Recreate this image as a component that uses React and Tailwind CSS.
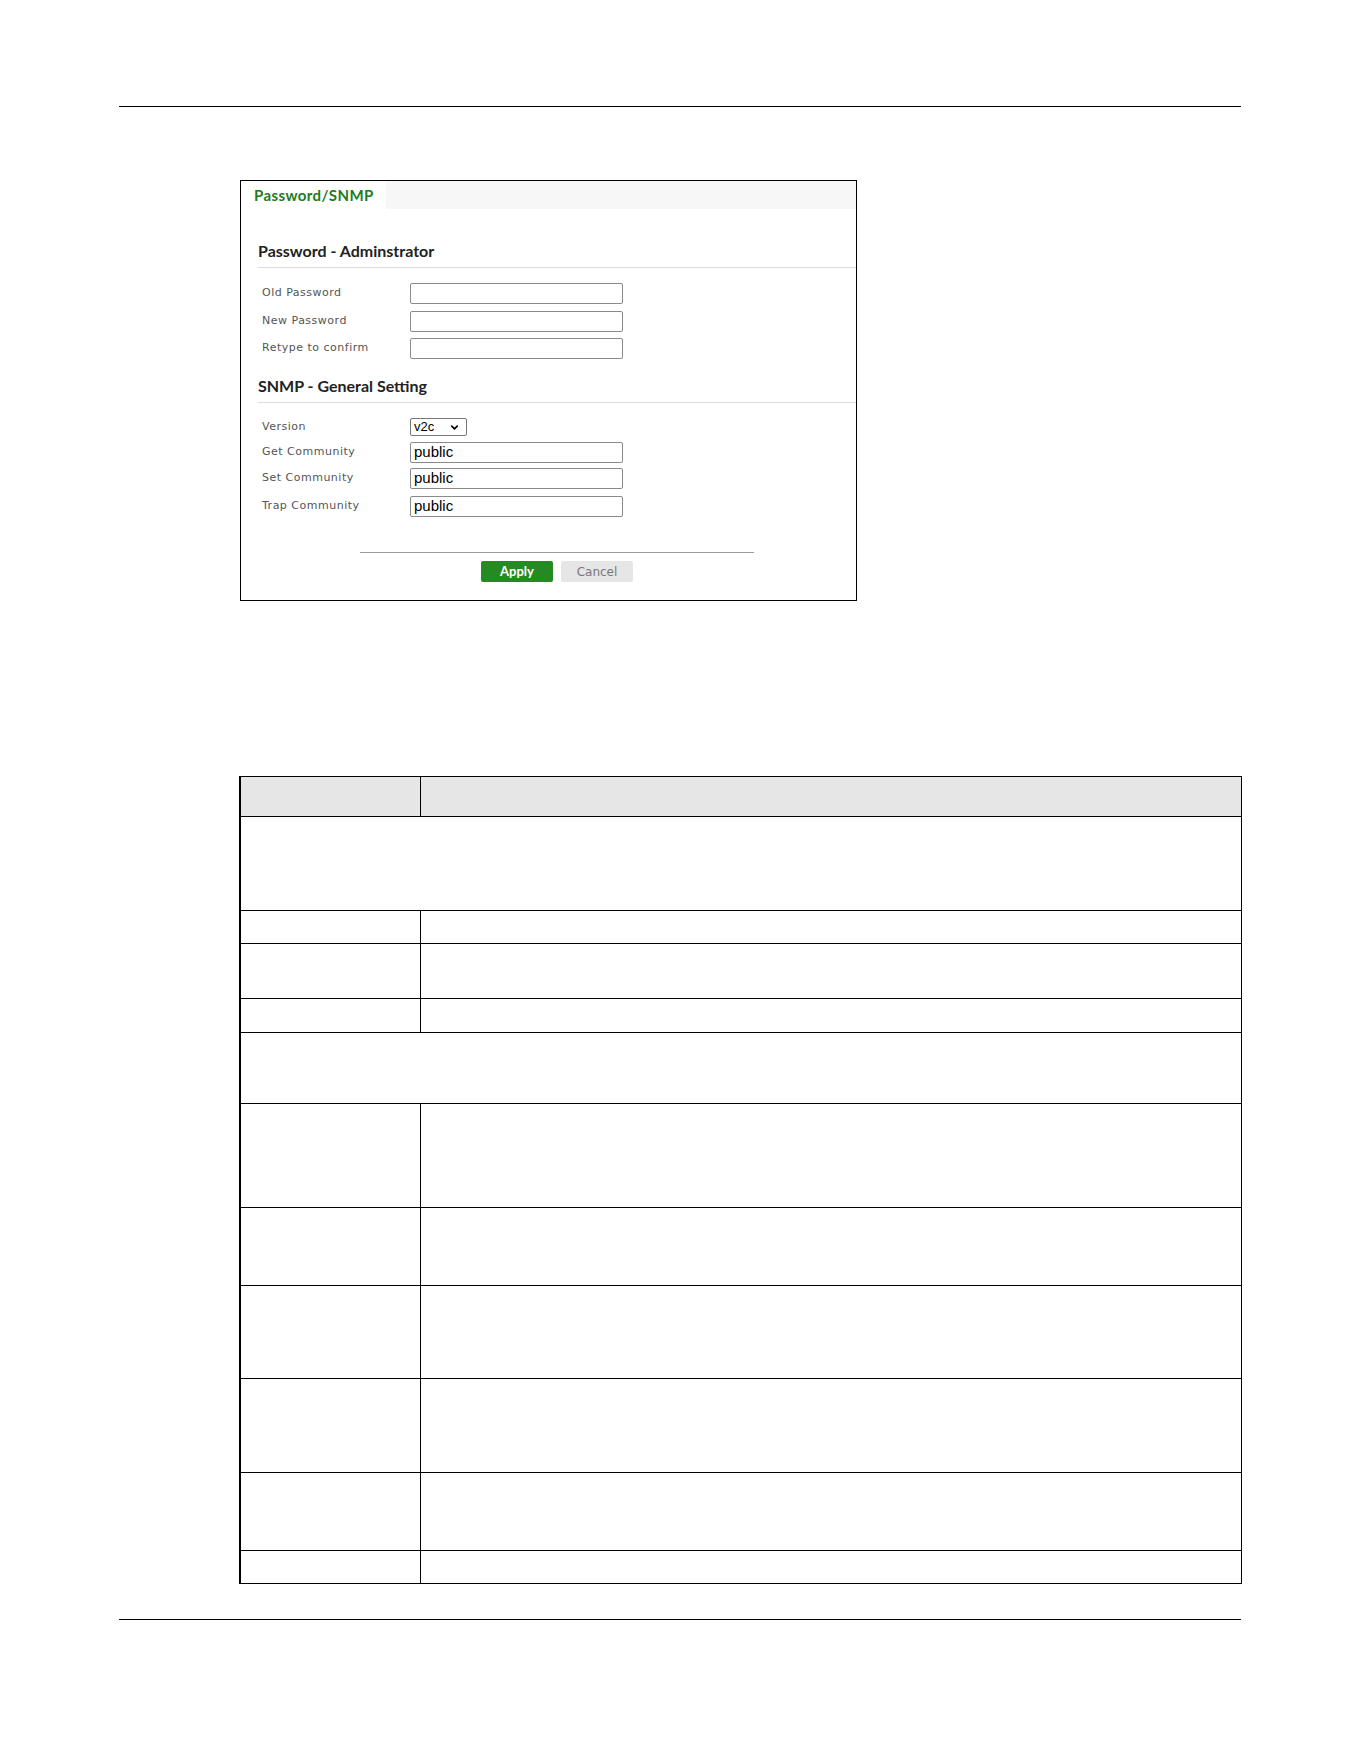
import { ChevronDown } from 'lucide-react';

const labelFont = { fontFamily: '"DejaVu Sans", sans-serif' };

// rows of the field reference table; span = one cell across both columns
const tableRows = [
  { h: 94, span: true },
  { h: 33 },
  { h: 55 },
  { h: 34 },
  { h: 71, span: true },
  { h: 104 },
  { h: 78 },
  { h: 93 },
  { h: 94 },
  { h: 78 },
  { h: 33 },
];

function Field({ label, value = '', mt }) {
  return (
    <div className={`flex items-center h-[21px] ${mt}`}>
      <span className="w-[152px] pl-[4px] text-[11px] tracking-[0.5px] text-[#555]" style={labelFont}>
        {label}
      </span>
      <input
        readOnly
        value={value}
        className="w-[213px] h-[21px] border border-[#8a8a8a] rounded-[2px] px-[3px] text-[15px] text-black font-['Liberation_Sans',sans-serif] outline-none"
      />
    </div>
  );
}

function SectionTitle({ children, mt }) {
  return (
    <div className={`ml-[17px] ${mt} border-b border-[#dcdcdc] pb-[6px]`}>
      <h2 className="h-[20px] leading-[20px] text-[16px] font-bold text-[#222] font-['Lato',sans-serif]">
        {children}
      </h2>
    </div>
  );
}

function SettingsPanel() {
  return (
    <div className="ml-[121px] mt-[73px] w-[617px] border border-black bg-white pb-[18px]">
      <div className="flex h-[28px]">
        <div className="w-[145px] flex items-center pl-[13px] bg-white">
          <span className="text-[15px] font-bold tracking-[0.4px] text-[#1b7d1b] font-['Lato',sans-serif]">
            Password/SNMP
          </span>
        </div>
        <div className="flex-1 bg-[#f7f7f7]" />
      </div>

      <SectionTitle mt="mt-[32px]">Password - Adminstrator</SectionTitle>
      <div className="ml-[17px]">
        <Field label="Old Password" mt="mt-[15px]" />
        <Field label="New Password" mt="mt-[7px]" />
        <Field label="Retype to confirm" mt="mt-[6px]" />
      </div>

      <SectionTitle mt="mt-[17px]">SNMP - General Setting</SectionTitle>
      <div className="ml-[17px]">
        <div className="flex items-center h-[18px] mt-[15px]">
          <span className="w-[152px] pl-[4px] text-[11px] tracking-[0.5px] text-[#555]" style={labelFont}>
            Version
          </span>
          <div className="w-[57px] h-[18px] border border-[#777] rounded-[2px] flex items-center justify-between pl-[3px] pr-[6px]">
            <span className="text-[13px] text-black font-['Liberation_Sans',sans-serif]">v2c</span>
            <ChevronDown size={11} strokeWidth={3.5} className="text-black" />
          </div>
        </div>
        <Field label="Get Community" value="public" mt="mt-[6px]" />
        <Field label="Set Community" value="public" mt="mt-[5px]" />
        <Field label="Trap Community" value="public" mt="mt-[7px]" />
      </div>

      <div className="ml-[119px] mt-[35px] w-[394px] border-t border-[#9a9a9a]" />
      <div className="flex gap-[8px] ml-[240px] mt-[8px]">
        <button className="w-[72px] h-[21px] rounded-[2px] bg-[#268a22] text-white text-[13px] font-bold font-['Lato',sans-serif]">
          Apply
        </button>
        <button className="w-[72px] h-[21px] rounded-[2px] bg-[#e6e6e6] text-[#777] text-[12px]" style={labelFont}>
          Cancel
        </button>
      </div>
    </div>
  );
}

function FieldTable() {
  return (
    <div className="ml-[120px] mt-[175px] w-[1003px] border-l-2 border-t border-r border-black">
      <div className="flex h-[40px] bg-[#e6e6e6] border-b border-black">
        <div className="w-[180px] border-r border-black" />
        <div className="flex-1" />
      </div>
      {tableRows.map((row, i) => (
        <div key={i} className="flex border-b border-black" style={{ height: row.h }}>
          {row.span ? (
            <div className="flex-1" />
          ) : (
            <>
              <div className="w-[180px] border-r border-black" />
              <div className="flex-1" />
            </>
          )}
        </div>
      ))}
    </div>
  );
}

export default function App() {
  return (
    <div className="min-h-[1761px] w-[1361px] bg-white pt-[106px]">
      <div className="ml-[119px] w-[1122px]">
        <div className="border-t border-black" />
        <SettingsPanel />
        <FieldTable />
        <div className="mt-[35px] border-t border-black" />
      </div>
    </div>
  );
}
